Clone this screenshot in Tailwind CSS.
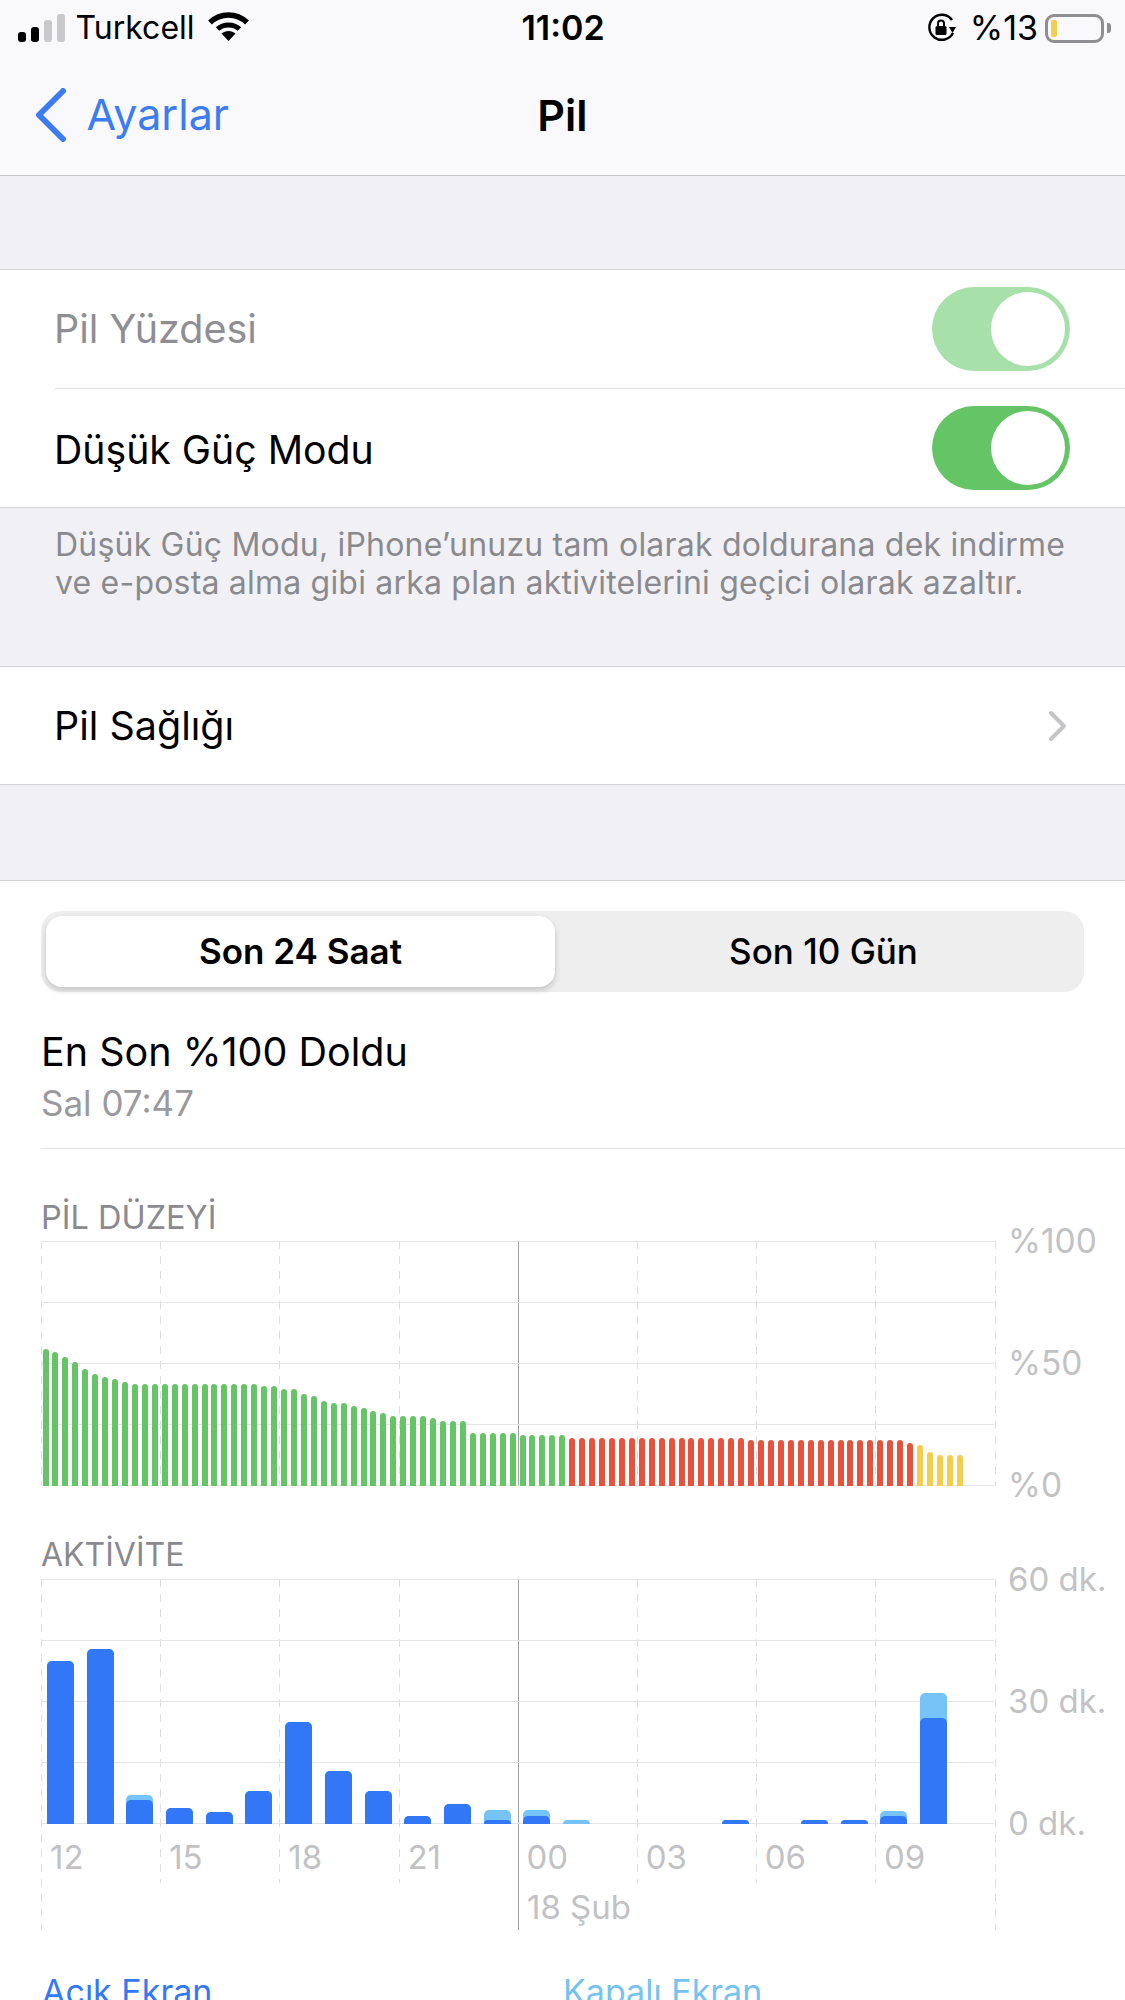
<!DOCTYPE html>
<html lang="tr">
<head>
    <meta charset="UTF-8">
    <title>Pil</title>
    <script src="https://cdn.jsdelivr.net/npm/@tailwindcss/browser@4"></script>
</head>
<body class="bg-white">
<div class="w-[1125px] h-[2000px] overflow-hidden font-['Inter',sans-serif] text-black">

    <!-- status + nav -->
    <div class="h-[176px] bg-[#f9f9fb] border-b border-[#c4c4c6]">
        <div class="h-[56px] pl-[18px] pr-[14px] grid grid-cols-3 items-center">
            <div class="flex items-center">
                <div class="flex items-end gap-[5px] h-[28px]">
                    <div class="w-[8px] h-[10px] rounded-[3px] bg-black"></div>
                    <div class="w-[8px] h-[15px] rounded-[3px] bg-black"></div>
                    <div class="w-[8px] h-[22px] rounded-[3px] bg-[#c9c9cb]"></div>
                    <div class="w-[8px] h-[28px] rounded-[3px] bg-[#c9c9cb]"></div>
                </div>
                <span class="ml-[10.5px] text-[32px] leading-none">Turkcell</span>
                <svg class="ml-[13px] -mt-[3px]" width="41" height="29" viewBox="0 0 41 29" fill="none">
                    <path d="M2 10.5C12.5 .5 28.500 .5 39 10.500" stroke="#000" stroke-width="5.500"/>
                    <path d="M9.500 17C15.500 11.500 25.500 11.500 31.500 17" stroke="#000" stroke-width="5"/>
                    <path d="M20.500 29L13.500 21.500C17.500 18 23.500 18 27.500 21.500Z" fill="#000"/>
                </svg>
            </div>
            <div class="text-center text-[34px] font-semibold leading-none -ml-[3px]">11:02</div>
            <div class="flex items-center justify-end">
                <svg width="30" height="30" viewBox="0 0 30 30" fill="none">
                    <path d="M26 20A12.500 12.500 0 1 1 25 7" stroke="#000" stroke-width="2.500"/>
                    <path d="M22 14H29L25.500 20Z" fill="#000"/>
                    <rect x="8.500" y="13" width="11" height="9" rx="1.500" fill="#000"/>
                    <path d="M11 13V10.500A3 3 0 0 1 17 10.500V13" stroke="#000" stroke-width="2"/>
                </svg>
                <span class="ml-[13px] text-[34px] leading-none">%13</span>
                <div class="ml-[7px] w-[59px] h-[29px] rounded-[9px] border-[3px] border-[#8e8e93] p-[3px]">
                    <div class="w-[6px] h-full rounded-[2px] bg-[#f3cd4b]"></div>
                </div>
                <div class="ml-[3px] w-[4px] h-[10px] rounded-r-[3px] bg-[#8e8e93]"></div>
            </div>
        </div>
        <div class="h-[118px] pl-[35px] grid grid-cols-3 items-center">
            <div class="flex items-center">
                <svg width="32" height="54" viewBox="0 0 32 54" fill="none">
                    <path d="M28 3L4 27L28 51" stroke="#3d7cf0" stroke-width="6" stroke-linecap="round" stroke-linejoin="round"/>
                </svg>
                <span class="ml-[19.5px] -mt-[2px] text-[43px] leading-none text-[#3d7cf0]">Ayarlar</span>
            </div>
            <div class="text-center text-[43px] font-semibold leading-none -ml-[35px]">Pil</div>
        </div>
    </div>

    <!-- ayarlar -->
    <div class="bg-[#f1f1f5]">
        <div class="h-[94px] border-b border-[#d2d2d6]"></div>
        <div class="bg-white border-b border-[#d2d2d6]">
            <div class="ml-[55px] h-[119px] pr-[55px] flex items-center justify-between border-b border-[#dcdcde]">
                <span class="text-[39.5px] -ml-[1px] mt-[2px] text-[#8e8e93]">Pil Yüzdesi</span>
                <div class="w-[138px] h-[84px] rounded-full bg-[#a8e0aa] flex items-center justify-end pr-[5px]">
                    <div class="w-[74px] h-[74px] rounded-full bg-white"></div>
                </div>
            </div>
            <div class="ml-[55px] h-[118px] pr-[55px] flex items-center justify-between">
                <span class="text-[39.200px] -ml-[1px] mt-[4px]">Düşük Güç Modu</span>
                <div class="w-[138px] h-[84px] rounded-full bg-[#65c466] flex items-center justify-end pr-[5px]">
                    <div class="w-[74px] h-[74px] rounded-full bg-white"></div>
                </div>
            </div>
        </div>
        <div class="h-[158px] px-[55px] pt-[18px] text-[32px] leading-[38px] text-[#8a8a8e] tracking-[0.2px]">
            <p class="whitespace-nowrap">Düşük Güç Modu, iPhone’unuzu tam olarak doldurana dek indirme</p>
            <p class="whitespace-nowrap">ve e-posta alma gibi arka plan aktivitelerini geçici olarak azaltır.</p>
        </div>
        <div class="h-[119px] pl-[55px] pr-[57px] bg-white border-y border-[#d2d2d6] flex items-center justify-between">
            <span class="text-[39.5px] -ml-[1px] mt-[2px]">Pil Sağlığı</span>
            <svg width="20" height="32" viewBox="0 0 20 32" fill="none">
                <path d="M3 3L16 16L3 29" stroke="#c4c4c6" stroke-width="4" stroke-linecap="round" stroke-linejoin="round"/>
            </svg>
        </div>
        <div class="h-[96px] border-b border-[#d2d2d6]"></div>
    </div>

    <!-- grafik bolumu -->
    <div class="bg-white">
        <div class="pl-[41px] pr-[41px] pt-[30px]">
            <div class="h-[81px] rounded-[20px] bg-[#eeeeef] p-[5px] flex">
                <div class="w-[509px] rounded-[16px] bg-white shadow-[0_3px_6px_rgba(0,0,0,0.18)] flex items-center justify-center text-[35px] font-semibold">Son 24 Saat</div>
                <div class="flex-1 pl-[13px] flex items-center justify-center text-[35px] font-medium">Son 10 Gün</div>
            </div>
        </div>
        <div class="ml-[41px] pt-[37px] h-[157px] border-b border-[#e0e0e0]">
            <div class="text-[39.5px] leading-[46px]">En Son %100 Doldu</div>
            <div class="text-[35px] leading-[40px] mt-[8px] text-[#9a9a9c]">Sal 07:47</div>
        </div>

        <div class="pl-[41px] pt-[51px] text-[32.500px] leading-[36px] text-[#8a8a8e]">PİL DÜZEYİ</div>
        <div class="flex pl-[41px] pt-[5px]">
            <div id="levelChart" class="relative w-[953px] h-[245px]"></div>
            <div class="ml-[14px] h-[284px] -my-[20px] flex flex-col justify-between text-[33.500px] leading-[40px] text-[#c2c2c4]">
                <span>%100</span><span>%50</span><span>%0</span>
            </div>
        </div>

        <div class="pl-[41px] pt-[51px] text-[32px] leading-[36px] text-[#8a8a8e]">AKTİVİTE</div>
        <div class="flex pl-[41px] pt-[6px]">
            <div id="activityChart" class="relative w-[953px] h-[351px]">
                <div id="activityBars" class="relative h-[245px] pl-[6px] flex items-end gap-[12.7px]"></div>
                <div class="relative flex pt-[13px] text-[33px] leading-[40px] text-[#c2c2c4]">
                    <div class="w-[119.2px] pl-[9px]">12</div>
                    <div class="w-[119.2px] pl-[9px]">15</div>
                    <div class="w-[119.2px] pl-[9px]">18</div>
                    <div class="w-[119.2px] pl-[9px]">21</div>
                    <div class="w-[119.2px] pl-[9px]">00</div>
                    <div class="w-[119.2px] pl-[9px]">03</div>
                    <div class="w-[119.2px] pl-[9px]">06</div>
                    <div class="w-[119.2px] pl-[9px]">09</div>
                </div>
                <div class="relative pl-[486px] pt-[10px] text-[33px] leading-[40px] text-[#c2c2c4]">18 Şub</div>
            </div>
            <div class="ml-[14px] h-[284px] -mt-[20px] flex flex-col justify-between text-[33px] leading-[40px] text-[#c2c2c4]">
                <span>60 dk.</span><span>30 dk.</span><span>0 dk.</span>
            </div>
        </div>

        <div class="flex pl-[42px] pt-[42px] text-[34px] leading-[40px]">
            <div class="w-[521px] text-[#3478f6]">Açık Ekran</div>
            <div class="text-[#76c3f0]">Kapalı Ekran</div>
        </div>
    </div>
</div>

<script>
    const pitch = 119.2;

    // yatay 5 cizgi, dikey 9 kesikli cizgi
    function drawGrid(chart, tallH, midH) {
        [0, 61, 122, 183, 244].forEach(y => {
            const line = document.createElement('div');
            line.className = 'absolute left-0 right-0 h-px bg-[#e4e4e6]';
            line.style.top = y + 'px';
            chart.prepend(line);
        });
        for (let i = 0; i < 9; i++) {
            const line = document.createElement('div');
            const edge = i === 0 || i === 8;
            line.className = i === 4
                ? 'absolute top-0 w-px bg-[#a0a0a4]'
                : 'absolute top-0 w-px bg-[repeating-linear-gradient(to_bottom,#dedee0_0,#dedee0_8px,transparent_8px,transparent_15px)]';
            line.style.left = (i * pitch) + 'px';
            line.style.height = (i === 4 || edge ? tallH : midH) + 'px';
            chart.prepend(line);
        }
    }

    // pil duzeyi: [yukseklik, adet, renk]
    const levelRuns = [
        [136.7, 1, 'g'], [134, 1, 'g'], [129, 1, 'g'], [124.3, 1, 'g'], [116.7, 1, 'g'],
        [112, 1, 'g'], [109.3, 1, 'g'], [107, 1, 'g'], [104.3, 1, 'g'], [102, 13, 'g'],
        [99.7, 2, 'g'], [97, 2, 'g'], [92.3, 1, 'g'], [89.7, 1, 'g'], [85, 1, 'g'],
        [82.7, 2, 'g'], [80, 1, 'g'], [77.7, 1, 'g'], [75, 1, 'g'], [72.7, 1, 'g'],
        [70.3, 4, 'g'], [67.7, 1, 'g'], [65, 3, 'g'], [53, 5, 'g'], [50.7, 5, 'g'],
        [48.3, 18, 'r'], [46, 16, 'r'], [43.3, 1, 'r'],
        [41, 1, 'y'], [33.7, 1, 'y'], [31, 3, 'y']
    ];
    const levelColors = { g: 'bg-[#65c466]', r: 'bg-[#e5533f]', y: 'bg-[#f3cd4b]' };

    const levelChart = document.getElementById('levelChart');
    drawGrid(levelChart, 245, 245);
    const levelBars = document.createElement('div');
    levelBars.className = 'relative h-[245px] pl-[1.5px] flex items-end gap-[3.95px]';
    levelRuns.forEach(([h, count, c]) => {
        for (let i = 0; i < count; i++) {
            const bar = document.createElement('div');
            bar.className = 'w-[6px] rounded-t-[3px] ' + levelColors[c];
            bar.style.height = h + 'px';
            levelBars.appendChild(bar);
        }
    });
    levelChart.appendChild(levelBars);

    // aktivite: [acik ekran, kapali ekran]
    const activity = [
        [163, 0], [175, 0], [24, 5], [16, 0], [12, 0], [33, 0], [102, 0], [53, 0], [33, 0], [8, 0],
        [20, 0], [4, 10], [8, 6], [0, 4], [0, 0], [0, 0], [0, 0], [4, 0], [0, 0], [4, 0],
        [4, 0], [8, 5], [106, 25]
    ];
    const activityBars = document.getElementById('activityBars');
    drawGrid(document.getElementById('activityChart'), 351, 304);
    activity.forEach(([on, off]) => {
        const bar = document.createElement('div');
        bar.className = 'w-[27px] rounded-t-[5px] bg-[#76c3f7] flex items-end';
        bar.style.height = (on + off) + 'px';
        if (on) {
            const inner = document.createElement('div');
            inner.className = 'w-full rounded-t-[5px] bg-[#3277f5]';
            inner.style.height = on + 'px';
            bar.appendChild(inner);
        }
        activityBars.appendChild(bar);
    });
</script>
</body>
</html>
